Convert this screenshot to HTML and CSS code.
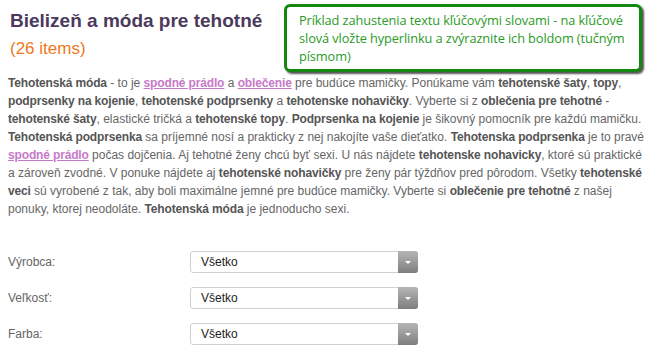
FILE: index.html
```html
<!DOCTYPE html>
<html lang="sk">
<head>
    <meta charset="UTF-8">
    <title>Bielizeň a móda pre tehotné</title>
    <link rel="stylesheet" href="styles.css">
</head>
<body>
    <div class="page">
        <div class="header">
            <div class="titles">
                <h1>Bielizeň a móda pre tehotné</h1>
                <div class="count">(26 items)</div>
            </div>
            <div class="note">Príklad zahustenia textu kľúčovými slovami - na kľúčové<br>slová vložte hyperlinku a zvýraznite ich boldom (tučným<br>písmom)</div>
        </div>
        <p class="intro">
            <b>Tehotenská móda</b> - to je <a href="#">spodné prádlo</a> a <a href="#">oblečenie</a> pre budúce mamičky. Ponúkame vám <b>tehotenské šaty</b>, <b>topy</b>,<br>
            <b>podprsenky na kojenie</b>, <b>tehotenské podprsenky</b> a <b>tehotenske nohavičky</b>. Vyberte si z <b>oblečenia pre tehotné</b> -<br>
            <b>tehotenské šaty</b>, elastické tričká a <b>tehotenské topy</b>. <b>Podprsenka na kojenie</b> je šikovný pomocník pre každú mamičku.<br>
            <b>Tehotenská podprsenka</b> sa príjemné nosí a prakticky z nej nakojíte vaše dieťatko. <b>Tehotenska podprsenka</b> je to pravé<br>
            <a href="#">spodné prádlo</a> počas dojčenia. Aj tehotné ženy chcú byť sexi. U nás nájdete <b>tehotenske nohavicky</b>, ktoré sú praktické<br>
            a zároveň zvodné. V ponuke nájdete aj <b>tehotenské nohavičky</b> pre ženy pár týždňov pred pôrodom. Všetky <b>tehotenské</b><br>
            <b>veci</b> sú vyrobené z tak, aby boli maximálne jemné pre budúce mamičky. Vyberte si <b>oblečenie pre tehotné</b> z našej<br>
            ponuky, ktorej neodoláte. <b>Tehotenská móda</b> je jednoducho sexi.
        </p>
        <div class="filters">
            <div class="row">
                <label>Výrobca:</label>
                <div class="select"><span>Všetko</span><i class="arrow"></i></div>
            </div>
            <div class="row">
                <label>Veľkosť:</label>
                <div class="select"><span>Všetko</span><i class="arrow"></i></div>
            </div>
            <div class="row">
                <label>Farba:</label>
                <div class="select"><span>Všetko</span><i class="arrow"></i></div>
            </div>
        </div>
    </div>
</body>
</html>
```

FILE: styles.css
```css
body { margin: 0; font-family: "Liberation Sans", Arial, sans-serif; background: #fff; color: #666; }
.page { padding: 4px 8px 0 8px; }
.header { display: flex; justify-content: space-between; align-items: flex-start; }
.titles { padding: 5px 0 0 2px; }
h1 { margin: 0; font-size: 19px; line-height: 24px; color: #4b3a5c; font-weight: bold; }
.count { margin-top: 6px; font-size: 17px; line-height: 20px; color: #ee7722; }
.note { width: 328px; padding: 4px 12px 4px 12px; border: 3px solid #13870f; border-radius: 6px; box-shadow: 2px 2px 2px #555; font-family: "Open Sans", "Noto Sans", sans-serif; font-size: 12.8px; line-height: 18px; color: #2b9a28; background: #fff; white-space: nowrap; letter-spacing: -0.1px; }
.intro { margin: 0; padding-top: 2px; font-size: 12px; line-height: 18px; white-space: nowrap; }
.intro b { color: #555; letter-spacing: -0.15px; }
.intro a { color: #c779c9; font-weight: bold; text-decoration: underline; letter-spacing: -0.15px; }
.filters { margin-top: 33px; }
.row { display: flex; align-items: center; height: 22px; margin-bottom: 14px; }
.row label { width: 182px; font-size: 12px; color: #666; }
.select { display: flex; align-items: center; width: 226px; height: 20px; border: 1px solid #d0d0d0; border-radius: 3px; }
.select span { flex: 1; padding-left: 10px; font-size: 12px; color: #222; }
.arrow { width: 20px; height: 22px; margin: -1px -1px -1px 0; border-radius: 0 3px 3px 0; background: linear-gradient(#b5b5b5, #7e7e7e); position: relative; }
.arrow::after { content: ""; position: absolute; left: 7px; top: 10px; border-left: 3px solid transparent; border-right: 3px solid transparent; border-top: 3px solid #fff; }
```
